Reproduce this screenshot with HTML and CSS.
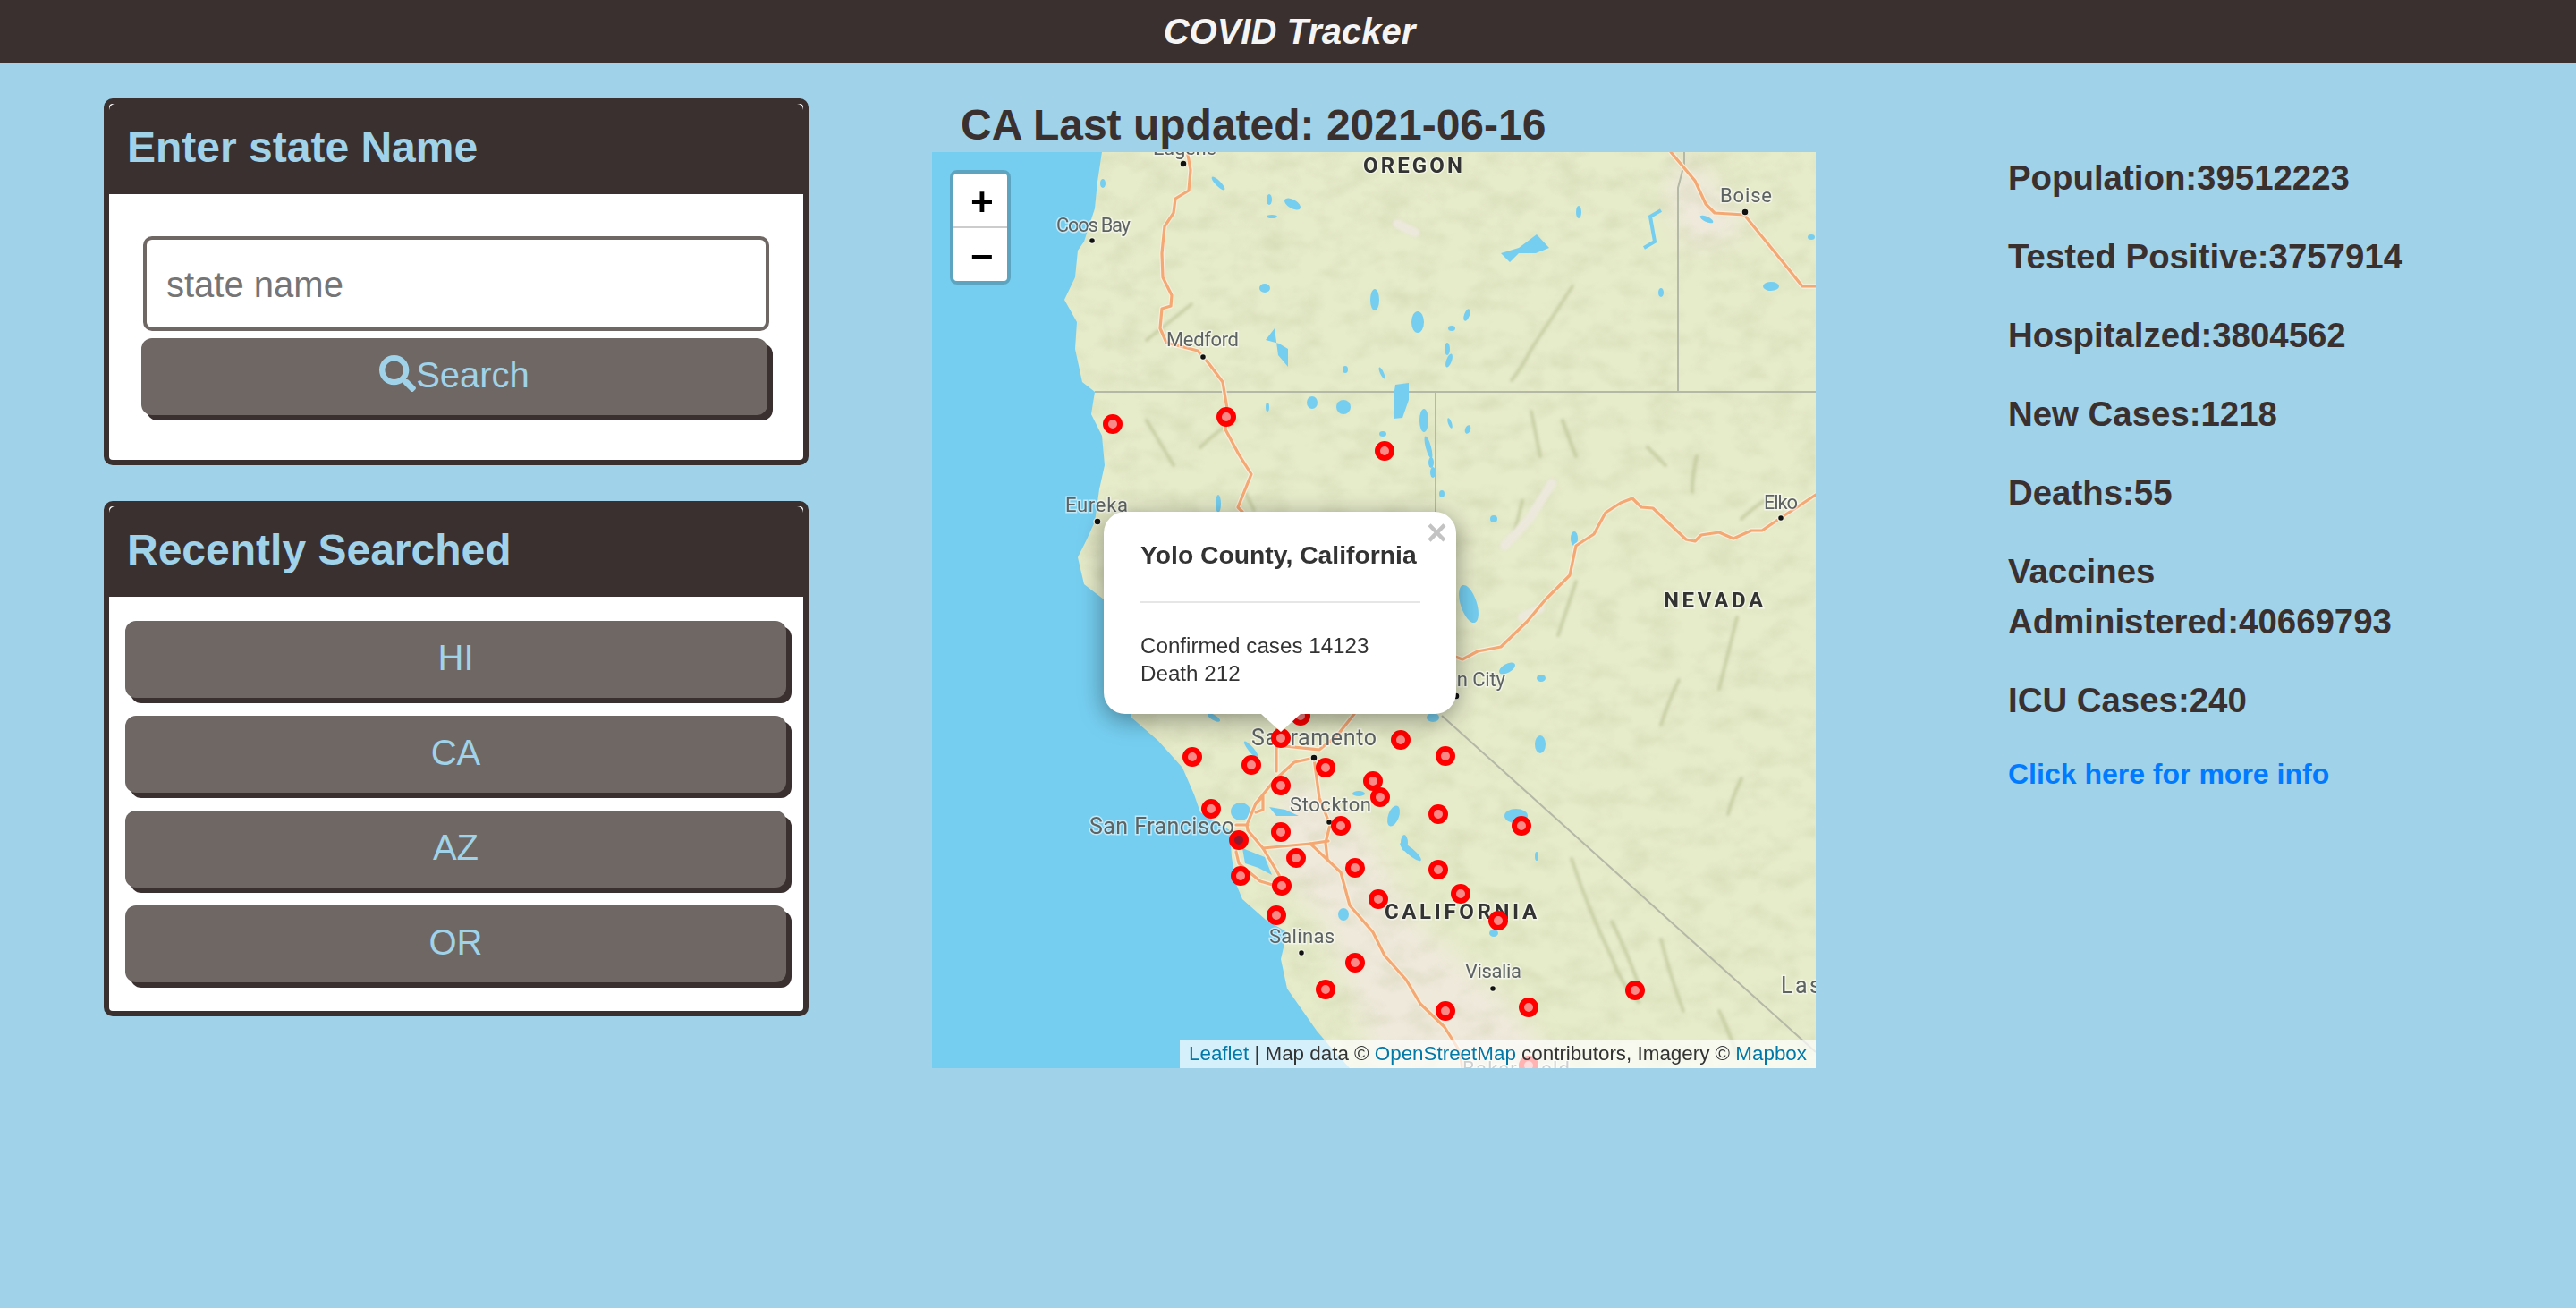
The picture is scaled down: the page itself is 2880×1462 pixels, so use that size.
FILE: index.html
```html
<!DOCTYPE html>
<html lang="en">
<head>
    <meta charset="UTF-8">
    <meta name="viewport" content="width=device-width, initial-scale=1.0">
    <title>COVID Tracker</title>
    <link rel="stylesheet" href="styles.css">
</head>
<body>

    <header class="topbar">
        <h1>COVID Tracker</h1>
    </header>

    <main class="page">
        <aside class="sidebar">
            <section class="panel">
                <h2 class="panel-head">Enter state Name</h2>
                <form class="search-form">
                    <input class="state-input" type="text" placeholder="state name">
                    <button class="btn" type="button">
                        <svg class="search-icon" viewBox="0 0 512 512"><path d="M505 442.7L405.3 343c-4.5-4.5-10.6-7-17-7H372c27.6-35.3 44-79.7 44-128C416 93.1 322.9 0 208 0S0 93.1 0 208s93.1 208 208 208c48.3 0 92.7-16.4 128-44v16.3c0 6.4 2.5 12.5 7 17l99.7 99.7c9.4 9.4 24.6 9.4 33.9 0l28.3-28.3c9.4-9.4 9.4-24.6.1-34zM208 336c-70.7 0-128-57.2-128-128 0-70.7 57.2-128 128-128 70.7 0 128 57.2 128 128 0 70.7-57.2 128-128 128z"/></svg>Search
                    </button>
                </form>
            </section>

            <section class="panel">
                <h2 class="panel-head">Recently Searched</h2>
                <div class="recent-list">
                    <button class="btn" type="button">HI</button>
                    <button class="btn" type="button">CA</button>
                    <button class="btn" type="button">AZ</button>
                    <button class="btn" type="button">OR</button>
                </div>
            </section>
        </aside>

        <section class="map-col">
            <h2 class="map-title">CA Last updated: 2021-06-16</h2>
            <div class="map">
                <svg class="map-svg" viewBox="0 0 988 1024">
                    <defs>
                        <clipPath id="land-clip"><use href="#land"/></clipPath>
                        <path id="land" d="M190 0L185 33L182 63L170 100L163 110L160 140L148 165L162 190L160 220L168 257L182 268L178 293L190 317L193 350L187 377L182 413L173 433L163 453L170 483L192 500L223 632L253 658L280 688L293 718L300 738L333 758L335 788L340 818L347 835L373 858L397 872L390 902L397 935L430 982L447 1002L467 1024L988 1024L988 0Z"/>
                        <filter id="noise" x="0" y="0" width="100%" height="100%">
                            <feTurbulence type="fractalNoise" baseFrequency=".03 .045" numOctaves="4" seed="11"/>
                            <feColorMatrix values="0 0 0 0 .52  0 0 0 0 .55  0 0 0 0 .32  1.9 0 0 0 -.78"/>
                            <feGaussianBlur stdDeviation="1"/>
                        </filter>
                        <filter id="soft"><feGaussianBlur stdDeviation="12"/></filter>
                        <filter id="softer"><feGaussianBlur stdDeviation="1.8"/></filter>
                        <g id="roads">
                            <path d="M286 3L289 20L287 43L272 52L270 68L260 83L257 113L258 140L268 160L267 172L257 175L255 197L262 213L297 222L310 237L325 257L330 287L328 310L343 338L357 360L342 397L347 402"/>
                            <path d="M826 0L853 32L865 58L875 68L908 70L953 125L973 150L988 150"/>
                            <path d="M988 383L970 395L950 408L928 423L916 423L896 432L880 425L860 428L853 435L843 433L806 398L793 397L783 387L770 392L753 403L740 427L720 440L713 473L686 500L665 525L636 553L610 558L593 567L580 562"/>
                            <path d="M385 645L385 692"/>
                            <path d="M385 663L433 668L453 652L472 628"/>
                            <path d="M427 677L405 682L383 702L362 728L352 752L353 758L370 778L388 808L392 822"/>
                            <path d="M427 677L433 722L445 752L440 772L442 790"/>
                            <path d="M370 778L423 773L443 770"/>
                            <path d="M423 773L457 805L467 842L493 872L506 898L530 925L546 952L573 978L590 1005L593 1024"/>
                            <path d="M340 782L343 795L367 815L391 822"/>
                            <path d="M340 752L353 752"/>
                            <path d="M362 728L370 720L370 735L362 738"/>
                        </g>
                    </defs>

                    <rect class="sea" width="988" height="1024"/>
                    <use href="#land" class="land"/>

                    <g clip-path="url(#land-clip)">
                        <path class="valley" filter="url(#soft)" d="M395 690L480 750L540 860L650 960L700 1024L500 1024L440 860L380 790Z"/>
                        <path class="valley" filter="url(#soft)" d="M840 0L880 40L910 90L850 110L820 50Z"/>
                        <rect width="988" height="1024" filter="url(#noise)" class="relief"/>
                        <g class="ridges" filter="url(#softer)">
                            <path d="M716 150Q690 190 670 220Q660 240 648 255"/>
                            <path d="M715 790Q735 850 760 900Q770 930 790 950M760 860Q775 890 790 930M815 880Q825 920 840 960M880 960Q890 980 900 1010"/>
                            <path d="M670 290Q675 315 680 340M705 300Q712 320 720 340M660 390Q655 410 650 430M800 330Q810 340 820 350M855 340Q850 360 850 380M930 390Q915 400 905 410"/>
                            <path d="M835 590Q825 610 815 640M905 700Q895 720 890 740M720 480Q710 510 700 540M900 520Q890 560 880 600"/>
                            <path d="M300 330Q320 310 340 300M240 300Q255 325 270 350M350 380Q355 390 360 400M240 210Q265 190 290 170"/>
                        </g>
                        <g class="pale" filter="url(#softer)">
                            <path d="M693 370L668 410L640 440"/>
                            <path d="M540 90L520 80M680 510L660 520"/>
                        </g>
                    </g>

                    <g class="borders">
                        <path d="M182 268L988 268"/>
                        <path d="M563 268L563 420"/>
                        <path d="M834 268L834 40L841 13L841 0"/>
                        <path d="M570 630L988 1006"/>
                    </g>

                    <g class="water">
                        <path d="M636 113L656 107L676 92L690 107L675 113L656 113L646 123Z"/>
                        <path d="M516 273L518 260L533 258L533 277L526 297L516 298Z"/>
                        <path d="M383 197L373 210L388 214L398 220L398 240L387 227Z"/>
                        <path d="M347 778L372 788L380 808L365 800L350 795Z"/>
                        <path d="M377 732L395 735L410 742L385 742Z"/>
                        <ellipse cx="345" cy="737" rx="11" ry="10"/>
                        <ellipse cx="191" cy="35" rx="3" ry="5"/>
                        <ellipse cx="320" cy="35" rx="10" ry="3" transform="rotate(45 320 35)"/>
                        <ellipse cx="377" cy="53" rx="3" ry="6"/>
                        <ellipse cx="403" cy="58" rx="10" ry="5" transform="rotate(30 403 58)"/>
                        <ellipse cx="380" cy="72" rx="6" ry="2"/>
                        <ellipse cx="372" cy="152" rx="6" ry="5"/>
                        <ellipse cx="495" cy="165" rx="5" ry="12"/>
                        <ellipse cx="462" cy="243" rx="3" ry="4"/>
                        <ellipse cx="375" cy="285" rx="2" ry="5"/>
                        <ellipse cx="425" cy="280" rx="6" ry="7"/>
                        <ellipse cx="460" cy="285" rx="8" ry="8"/>
                        <ellipse cx="320" cy="393" rx="3" ry="10"/>
                        <ellipse cx="543" cy="190" rx="7" ry="12"/>
                        <ellipse cx="598" cy="182" rx="3" ry="7" transform="rotate(20 598 182)"/>
                        <ellipse cx="581" cy="197" rx="4" ry="3"/>
                        <ellipse cx="576" cy="220" rx="3" ry="7"/>
                        <ellipse cx="578" cy="233" rx="3" ry="8" transform="rotate(20 578 233)"/>
                        <ellipse cx="503" cy="247" rx="2" ry="7" transform="rotate(-25 503 247)"/>
                        <ellipse cx="550" cy="300" rx="5" ry="13"/>
                        <ellipse cx="504" cy="315" rx="4" ry="3"/>
                        <ellipse cx="555" cy="330" rx="3" ry="13" transform="rotate(-15 555 330)"/>
                        <ellipse cx="558" cy="347" rx="3" ry="6"/>
                        <ellipse cx="560" cy="358" rx="3" ry="6"/>
                        <ellipse cx="570" cy="382" rx="3" ry="4"/>
                        <ellipse cx="579" cy="303" rx="2" ry="6" transform="rotate(-20 579 303)"/>
                        <ellipse cx="599" cy="310" rx="3" ry="5" transform="rotate(20 599 310)"/>
                        <ellipse cx="628" cy="410" rx="4" ry="4"/>
                        <ellipse cx="723" cy="67" rx="3" ry="7"/>
                        <ellipse cx="815" cy="157" rx="3" ry="5"/>
                        <ellipse cx="938" cy="150" rx="9" ry="5"/>
                        <ellipse cx="866" cy="75" rx="8" ry="3" transform="rotate(25 866 75)"/>
                        <ellipse cx="983" cy="95" rx="4" ry="3"/>
                        <ellipse cx="718" cy="432" rx="4" ry="8"/>
                        <ellipse cx="600" cy="505" rx="9" ry="22" transform="rotate(-18 600 505)"/>
                        <ellipse cx="643" cy="577" rx="10" ry="5" transform="rotate(-30 643 577)"/>
                        <ellipse cx="681" cy="588" rx="5" ry="4"/>
                        <ellipse cx="680" cy="662" rx="6" ry="10"/>
                        <ellipse cx="653" cy="742" rx="13" ry="8"/>
                        <ellipse cx="516" cy="742" rx="6" ry="12" transform="rotate(20 516 742)"/>
                        <ellipse cx="535" cy="782" rx="15" ry="4" transform="rotate(40 535 782)"/>
                        <ellipse cx="528" cy="772" rx="4" ry="9"/>
                        <ellipse cx="676" cy="787" rx="2" ry="5"/>
                        <ellipse cx="628" cy="873" rx="5" ry="4"/>
                        <ellipse cx="560" cy="632" rx="7" ry="5"/>
                        <ellipse cx="357" cy="668" rx="3" ry="12" transform="rotate(-40 357 668)"/>
                        <ellipse cx="315" cy="632" rx="8" ry="3" transform="rotate(30 315 632)"/>
                        <ellipse cx="460" cy="852" rx="6" ry="7"/>
                        <ellipse cx="477" cy="717" rx="7" ry="3"/>
                    </g>
                    <path class="river" d="M815 65L803 72L808 100L796 107"/>

                    <use href="#roads" class="road-casing"/>
                    <use href="#roads" class="road-line"/>

                    <g class="cities">
                        <circle cx="281" cy="13" r="4"/>
                        <circle cx="179" cy="99" r="3.5"/>
                        <circle cx="303" cy="229" r="3.5"/>
                        <circle cx="185" cy="413" r="4"/>
                        <circle cx="909" cy="67" r="4"/>
                        <circle cx="949" cy="409" r="3.5"/>
                        <circle cx="427" cy="677" r="4"/>
                        <circle cx="444" cy="749" r="3.5"/>
                        <circle cx="413" cy="895" r="3.5"/>
                        <circle cx="627" cy="935" r="3.5"/>
                        <circle cx="586" cy="608" r="4"/>
                    </g>

                    <g class="labels">
                        <text x="247" y="3" textLength="71">Eugene</text>
                        <text x="139" y="89" textLength="83">Coos Bay</text>
                        <text x="262" y="217" textLength="81">Medford</text>
                        <text x="149" y="402" textLength="70">Eureka</text>
                        <text x="881" y="56" textLength="58">Boise</text>
                        <text x="930" y="399" textLength="38">Elko</text>
                        <text x="530" y="597" textLength="111">Carson City</text>
                        <text class="big" x="357" y="663" textLength="140">Sacramento</text>
                        <text x="400" y="737" textLength="91">Stockton</text>
                        <text class="big" x="176" y="762" textLength="162">San Francisco</text>
                        <text x="377" y="884" textLength="73">Salinas</text>
                        <text x="596" y="923" textLength="63">Visalia</text>
                        <text class="big" x="949" y="940" textLength="45">Las</text>
                        <text x="593" y="1032" textLength="120">Bakersfield</text>
                        <text class="state" x="482" y="23" textLength="111">OREGON</text>
                        <text class="state" x="818" y="509" textLength="111">NEVADA</text>
                        <text class="state" x="506" y="857" textLength="170">CALIFORNIA</text>
                    </g>

                    <g class="pins">
                        <circle cx="202" cy="304" r="8"/>
                        <circle cx="329" cy="296" r="8"/>
                        <circle cx="506" cy="334" r="8"/>
                        <circle cx="412" cy="630" r="8"/>
                        <circle cx="291" cy="676" r="8"/>
                        <circle cx="357" cy="685" r="8"/>
                        <circle cx="390" cy="655" r="8"/>
                        <circle cx="440" cy="688" r="8"/>
                        <circle cx="390" cy="708" r="8"/>
                        <circle cx="493" cy="703" r="8"/>
                        <circle cx="501" cy="721" r="8"/>
                        <circle cx="312" cy="734" r="8"/>
                        <circle cx="457" cy="753" r="8"/>
                        <circle cx="390" cy="760" r="8"/>
                        <circle class="pin-dark" cx="343" cy="769" r="8"/>
                        <circle cx="407" cy="789" r="8"/>
                        <circle cx="473" cy="800" r="8"/>
                        <circle cx="345" cy="809" r="8"/>
                        <circle cx="391" cy="820" r="8"/>
                        <circle cx="499" cy="835" r="8"/>
                        <circle cx="385" cy="853" r="8"/>
                        <circle cx="473" cy="906" r="8"/>
                        <circle cx="440" cy="936" r="8"/>
                        <circle cx="524" cy="657" r="8"/>
                        <circle cx="574" cy="675" r="8"/>
                        <circle cx="566" cy="740" r="8"/>
                        <circle cx="659" cy="753" r="8"/>
                        <circle cx="566" cy="802" r="8"/>
                        <circle cx="591" cy="829" r="8"/>
                        <circle cx="633" cy="859" r="8"/>
                        <circle cx="786" cy="937" r="8"/>
                        <circle cx="667" cy="956" r="8"/>
                        <circle cx="574" cy="960" r="8"/>
                        <circle cx="667" cy="1021" r="8"/>
                    </g>
                </svg>

                <div class="zoom-control">
                    <a class="zoom-btn" href="#">+</a>
                    <a class="zoom-btn" href="#">&#x2212;</a>
                </div>

                <div class="popup">
                    <a class="popup-close" href="#">&times;</a>
                    <h3 class="popup-title">Yolo County, California</h3>
                    <hr class="popup-rule">
                    <p class="popup-text">Confirmed cases 14123<br>Death 212</p>
                    <div class="popup-tip"></div>
                </div>

                <div class="attribution"><a href="#">Leaflet</a> | Map data &copy; <a href="#">OpenStreetMap</a> contributors, Imagery &copy; <a href="#">Mapbox</a></div>
            </div>
        </section>

        <section class="stats">
            <p class="stat">Population:39512223</p>
            <p class="stat">Tested Positive:3757914</p>
            <p class="stat">Hospitalzed:3804562</p>
            <p class="stat">New Cases:1218</p>
            <p class="stat">Deaths:55</p>
            <p class="stat">Vaccines Administered:40669793</p>
            <p class="stat">ICU Cases:240</p>
            <a class="more-link" href="#">Click here for more info</a>
        </section>
    </main>

</body>
</html>
```

FILE: styles.css
```css
* {
    box-sizing: border-box;
}

body {
    margin: 0;
    min-height: 1462px;
    font-family: "Liberation Sans", Arial, sans-serif;
    background-color: #a0d3e9;
    color: #3a302f;
}

.topbar {
    height: 70px;
    padding-left: 3px;
    background-color: #3a302f;
    display: flex;
    align-items: center;
    justify-content: center;
}

.topbar h1 {
    margin: 0;
    font-size: 40px;
    font-style: italic;
    font-weight: bold;
    color: #f5f5f5;
}

.page {
    display: flex;
    align-items: flex-start;
    padding: 40px 0 0 116px;
}

.sidebar {
    width: 788px;
    margin-right: 138px;
    display: flex;
    flex-direction: column;
    gap: 40px;
}

.panel {
    border: 6px solid #3a302f;
    border-radius: 10px;
    background-color: #fff;
}

.panel-head {
    margin: 0;
    height: 101px;
    padding: 0 20px;
    background-color: #3a302f;
    border-radius: 7px 7px 0 0;
    color: #a0d3e9;
    font-size: 48px;
    line-height: 98px;
}

.search-form {
    padding: 47px 0 50px 36px;
    display: flex;
    flex-direction: column;
    gap: 8px;
}

.state-input {
    width: 700px;
    height: 106px;
    margin-left: 2px;
    padding: 2px 20px 0 22px;
    border: 4px solid #6f6764;
    border-radius: 10px;
    background-color: #fff;
    font-family: inherit;
    font-size: 40px;
    outline: none;
}

.state-input::placeholder {
    color: #757575;
}

.btn {
    width: 700px;
    height: 86px;
    padding: 0 0 3px;
    border: none;
    border-radius: 12px;
    background-color: #6f6764;
    box-shadow: 6px 6px 0 #3a302f;
    color: #a0d3e9;
    font-family: inherit;
    font-size: 40px;
    cursor: pointer;
}

.search-icon {
    width: 41px;
    height: 41px;
    fill: #a0d3e9;
    vertical-align: -5px;
}

.recent-list {
    padding: 27px 19px 32px 18px;
    display: flex;
    flex-direction: column;
    gap: 20px;
}

.recent-list .btn {
    width: 100%;
}

.map-col {
    width: 988px;
    margin-right: 215px;
}

.map-title {
    margin: 0;
    height: 60px;
    padding-left: 32px;
    font-size: 48px;
    line-height: 60px;
}

.map {
    position: relative;
    width: 988px;
    height: 1024px;
    overflow: hidden;
}

.map-svg {
    display: block;
    width: 988px;
    height: 1024px;
}

.sea {
    fill: #75cef0;
}

.land {
    fill: #e6ebca;
}

.valley {
    fill: #efe9dc;
}

.relief {
    opacity: .32;
}

.ridges path {
    fill: none;
    stroke: #b9c193;
    stroke-width: 4;
    stroke-linecap: round;
    opacity: .6;
}

.pale path {
    fill: none;
    stroke: #ece8dc;
    stroke-width: 10;
    stroke-linecap: round;
}

.borders path {
    fill: none;
    stroke: #b4b8a6;
    stroke-width: 2;
}

.water {
    fill: #75cef0;
}

.river {
    fill: none;
    stroke: #75cef0;
    stroke-width: 4;
}

.road-casing,
.road-line {
    fill: none;
    stroke-linejoin: round;
    stroke-linecap: round;
}

.road-casing {
    stroke: #f7efdc;
    stroke-width: 5.5;
}

.road-line {
    stroke: #f4a873;
    stroke-width: 3.2;
}

.cities circle {
    fill: #111;
    stroke: #eef0dc;
    stroke-width: 1.5;
}

.labels text {
    font-family: Roboto, "Liberation Sans", sans-serif;
    font-size: 22px;
    fill: #5d6363;
    stroke: rgba(255, 255, 255, .55);
    stroke-width: 3px;
    paint-order: stroke;
    filter: blur(.4px);
}

.labels .big {
    font-size: 25px;
}

.labels .state {
    font-size: 24px;
    font-weight: bold;
    fill: #333;
}

.pins circle {
    fill: #f88986;
    stroke: #ff0000;
    stroke-width: 6;
}

.pins .pin-dark {
    fill: #8c1a30;
}

.zoom-control {
    position: absolute;
    top: 20px;
    left: 20px;
    width: 68px;
    border: 4px solid rgba(0, 0, 0, .2);
    border-radius: 8px;
    background-clip: padding-box;
}

.zoom-btn {
    display: block;
    width: 60px;
    height: 60px;
    padding-left: 4px;
    background-color: #fff;
    color: #000;
    font-family: "Liberation Mono", monospace;
    font-size: 44px;
    font-weight: bold;
    line-height: 70px;
    text-align: center;
    text-decoration: none;
    overflow: hidden;
}

.zoom-btn:first-child {
    height: 61px;
    border-bottom: 2px solid #ccc;
    border-radius: 4px 4px 0 0;
}

.zoom-btn:last-child {
    height: 59px;
    border-radius: 0 0 4px 4px;
}

.popup {
    position: absolute;
    top: 402px;
    left: 192px;
    width: 394px;
    height: 226px;
    padding: 31px 40px 0;
    border-radius: 24px;
    background-color: #fff;
    box-shadow: 0 6px 28px rgba(0, 0, 0, .4);
    color: #333;
}

.popup-close {
    position: absolute;
    top: 0;
    right: 10px;
    color: #c3c3c3;
    font-size: 40px;
    font-weight: bold;
    line-height: 46px;
    text-decoration: none;
}

.popup-title {
    margin: 0 0 0 1px;
    font-size: 28.3px;
    line-height: 34px;
}

.popup-rule {
    margin: 35px 0 32px;
    height: 2px;
    border: none;
    background-color: #e6e6e6;
}

.popup-text {
    margin: 0 0 0 1px;
    font-size: 24.2px;
    line-height: 31px;
}

.popup-tip {
    position: absolute;
    top: 226px;
    left: 176px;
    width: 44px;
    height: 20px;
    background-color: #fff;
    clip-path: polygon(0 0, 100% 0, 50% 100%);
}

.attribution {
    position: absolute;
    right: 0;
    bottom: 0;
    height: 32px;
    padding: 0 10px;
    background-color: rgba(255, 255, 255, .7);
    color: #333;
    font-size: 22.4px;
    line-height: 32px;
}

.attribution a {
    color: #0078a8;
    text-decoration: none;
}

.stats {
    width: 560px;
    padding-top: 61px;
}

.stat {
    margin: 0 0 32px;
    font-size: 38.4px;
    font-weight: bold;
    line-height: 56px;
}

.more-link {
    display: block;
    color: #007bff;
    font-size: 32px;
    font-weight: bold;
    line-height: 45px;
    text-decoration: none;
}
```
